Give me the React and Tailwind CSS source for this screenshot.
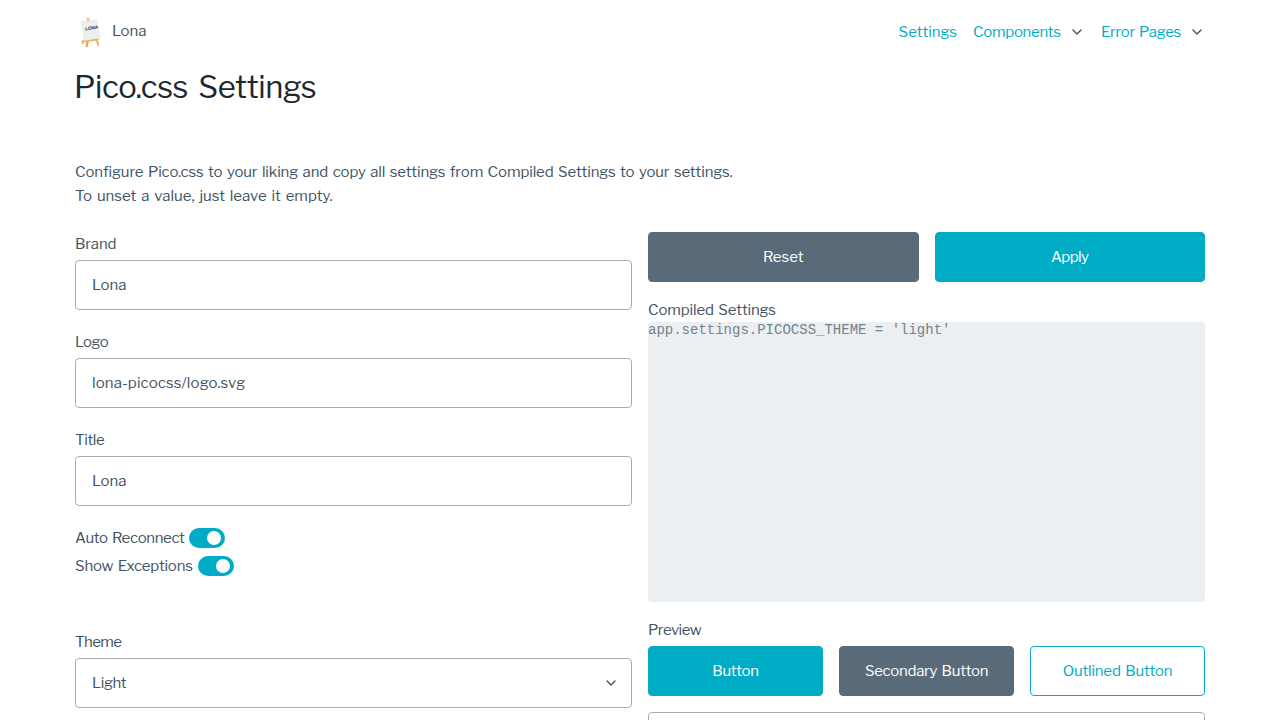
import React from "react";

const chevron = "M6 9l6 6 6-6";

function Chevron({ className }) {
  return (
    <svg viewBox="0 0 24 24" className={className} fill="none" stroke="#415462" strokeWidth="2" strokeLinecap="round" strokeLinejoin="round">
      <path d={chevron} />
    </svg>
  );
}

function Logo() {
  return (
    <svg viewBox="0 0 32 32" className="h-8 w-8">
      <g strokeLinecap="round">
        <path d="M12.500 25L11.800 30" stroke="#e5a850" strokeWidth="2.400" />
        <path d="M9.500 24L7.500 27.500" stroke="#efc98a" strokeWidth="1.800" />
        <path d="M21.500 24L23.300 28.800" stroke="#ecc078" strokeWidth="2.400" />
        <path d="M7.500 25.500L23 23.200" stroke="#e8b15c" strokeWidth="2" />
        <path d="M13 3L13.300 5" stroke="#f0c77d" strokeWidth="3" />
      </g>
      <path d="M6.500 6L21.800 4.200L25 22L9.500 24.500Z" fill="#eeeff1" stroke="#dcdee1" strokeWidth=".5" />
      <text x="10.500" y="14.500" transform="rotate(-9 10.5 14.5)" fill="#222" fontSize="4.600" fontWeight="700" fontFamily="Liberation Sans">LONA</text>
    </svg>
  );
}

function Field({ label, value, labelClass = "", inputClass = "" }) {
  return (
    <label className="mb-5 block">
      <span className={"block h-6 " + labelClass}>{label}</span>
      <input readOnly defaultValue={value} className={"mt-1 block h-[50px] w-full rounded-[4px] border border-[#a2afb9] bg-white px-4 outline-none " + inputClass} />
    </label>
  );
}

function Toggle({ label, labelClass }) {
  return (
    <div className="flex h-7 items-start">
      <span className={"whitespace-nowrap " + labelClass}>{label}</span>
      <span className="mt-0.5 flex h-5 w-9 items-center justify-end rounded-full bg-[#00acc5] pr-1">
        <span className="h-3.5 w-3.5 rounded-full bg-white" />
      </span>
    </div>
  );
}

function Button({ children, className }) {
  return <button className={"h-[50px] flex-1 rounded-[4px] border " + className}>{children}</button>;
}

const primary = "border-[#00acc5] bg-[#00acc5] text-white";
const secondary = "border-[#596b78] bg-[#596b78] text-white";

export default function App() {
  return (
    <div className="h-[720px] overflow-hidden bg-white px-[75px] font-['Libre_Franklin','Liberation_Sans',sans-serif] text-[15px] leading-6 text-[#415462]">
      <nav className="flex h-16 items-center justify-between">
        <div className="flex items-center gap-[5px]">
          <Logo />
          <span className="pb-0.5">Lona</span>
        </div>
        <div className="flex items-center gap-4 text-[#00acc5]">
          <a className="tracking-[-0.03px]">Settings</a>
          <a className="flex items-center gap-2"><span className="w-22 whitespace-nowrap tracking-[-0.3px]">Components</span><Chevron className="h-4 w-4" /></a>
          <a className="flex items-center gap-2"><span className="w-20 whitespace-nowrap tracking-[-0.3px] [word-spacing:1.200px]">Error Pages</span><Chevron className="h-4 w-4" /></a>
        </div>
      </nav>
      <h1 className="-ml-px h-24 text-[31px] leading-[46px] tracking-[-0.4px] text-[#1b2832] [word-spacing:4px]">Pico.css Settings</h1>
      <div className="mb-6 h-12 whitespace-nowrap">
        <p className="h-6 tracking-[-0.13px] [word-spacing:1.400px]">
          Configure Pico.css to your liking and copy all settings from Compiled Settings to your settings.
        </p>
        <p className="h-6 [word-spacing:1.600px]">To unset a value, just leave it empty.</p>
      </div>
      <div className="grid grid-cols-2 gap-4">
        <div>
          <Field label="Brand" value="Lona" labelClass="tracking-[-0.15px]" />
          <Field label="Logo" value="lona-picocss/logo.svg" labelClass="tracking-[-0.5px]" inputClass="tracking-[0.11px]" />
          <Field label="Title" value="Lona" labelClass="tracking-[-0.4px]" />
          <Toggle label="Auto Reconnect" labelClass="w-[114px] tracking-[-0.36px] [word-spacing:1.500px]" />
          <Toggle label="Show Exceptions" labelClass="w-[123px] tracking-[-0.2px] [word-spacing:1.500px]" />
          <div className="mt-12">
            <span className="block h-6 tracking-[-0.6px]">Theme</span>
            <div className="mt-1 flex h-[50px] items-center justify-between rounded-[4px] border border-[#a2afb9] pl-4 pr-3">
              <span className="tracking-[-0.35px]">Light</span>
              <Chevron className="h-4 w-4" />
            </div>
          </div>
        </div>
        <div>
          <div className="flex gap-4">
            <Button className={secondary}>Reset</Button>
            <Button className={primary + " tracking-[-0.6px]"}>Apply</Button>
          </div>
          <div className="mt-4 h-6 tracking-[-0.15px] [word-spacing:1.500px]">Compiled Settings</div>
          <pre className="h-[280px] rounded-[4px] bg-[#ebeff2] font-['Liberation_Mono',monospace] text-[14px] leading-4 text-[#73828c]">app.settings.PICOCSS_THEME = 'light'</pre>
          <div className="mt-4 h-7 tracking-[-0.5px]">Preview</div>
          <div className="flex gap-4">
            <Button className={primary + " tracking-[-0.3px]"}>Button</Button>
            <Button className={secondary + " tracking-[-0.3px] [word-spacing:1.500px]"}>Secondary Button</Button>
            <Button className="border-[#00acc5] bg-white tracking-[-0.2px] text-[#00acc5] [word-spacing:1.500px]">Outlined Button</Button>
          </div>
          <div className="mt-4 h-[50px] rounded-[4px] border border-[#a2afb9]" />
        </div>
      </div>
    </div>
  );
}
